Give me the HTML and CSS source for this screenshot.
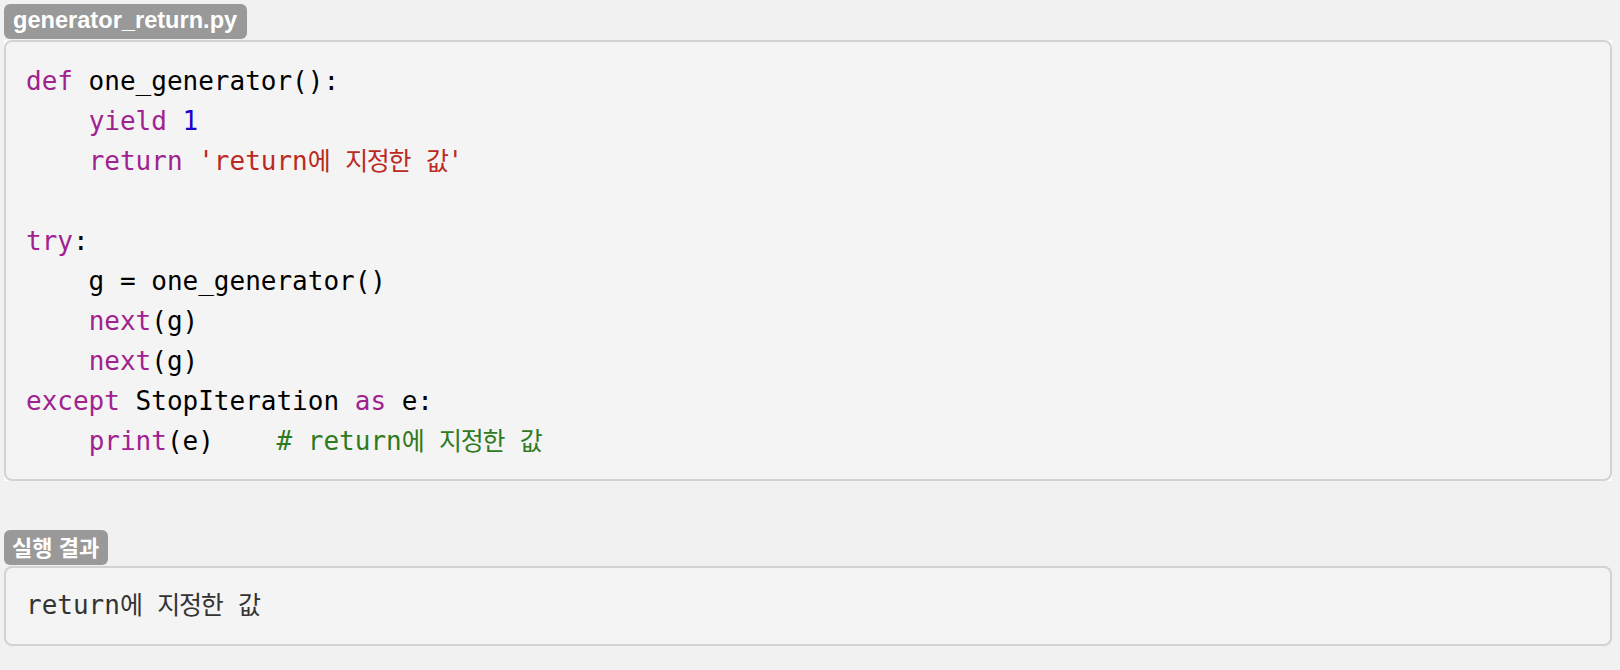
FILE: index.html
```html
<!DOCTYPE html>
<html lang="ko">
<head>
<meta charset="utf-8">
<title>generator_return.py</title>
<link rel="stylesheet" href="styles.css">
</head>
<body>
<div class="page">
  <section class="snippet">
    <div class="label">generator_return.py</div>
    <div class="code-wrap">
      <div class="code">
        <div class="line"><span class="kw">def</span> one_generator():</div>
        <div class="line">    <span class="kw">yield</span> <span class="num">1</span></div>
        <div class="line">    <span class="kw">return</span> <span class="str">'return<span class="ko">에</span> <span class="ko">지정한</span> <span class="ko">값</span>'</span></div>
        <div class="line"> </div>
        <div class="line"><span class="kw">try</span>:</div>
        <div class="line">    g = one_generator()</div>
        <div class="line">    <span class="kw">next</span>(g)</div>
        <div class="line">    <span class="kw">next</span>(g)</div>
        <div class="line"><span class="kw">except</span> StopIteration <span class="kw">as</span> e:</div>
        <div class="line">    <span class="kw">print</span>(e)    <span class="cmt"># return<span class="ko">에</span> <span class="ko">지정한</span> <span class="ko">값</span></span></div>
      </div>
    </div>
  </section>
  <section class="snippet result">
    <div class="label label-ko">실행 결과</div>
    <div class="code output">
      <div class="line">return<span class="ko">에</span> <span class="ko">지정한</span> <span class="ko">값</span></div>
    </div>
  </section>
</div>
</body>
</html>
```
FILE: styles.css
```css
html, body {
  margin: 0;
  padding: 0;
}
body {
  background: #f1f1f1;
}
.page {
  padding: 4px 8px 0 4px;
  display: flex;
  flex-direction: column;
}
.snippet {
  display: flex;
  flex-direction: column;
  align-items: flex-start;
}
.result {
  margin-top: 49px;
}
.label {
  background: #999999;
  color: #ffffff;
  font-family: "Liberation Sans", "Noto Sans CJK KR", sans-serif;
  font-weight: bold;
  font-size: 23.6px;
  line-height: 33px;
  padding: 0 10px 2px 9px;
  border-radius: 6px;
  margin-bottom: 1px;
}
.label-ko {
  font-family: "Noto Sans CJK KR", sans-serif;
  font-size: 22px;
  padding: 0 9px 2px 8px;
}
.code-wrap {
  align-self: stretch;
  background: #ffffff;
}
.code {
  box-sizing: border-box;
  align-self: stretch;
  background: #f4f4f4;
  border: 2px solid #d2d2d2;
  border-radius: 8px;
  font-family: "DejaVu Sans Mono", "Noto Sans CJK KR", monospace;
  font-size: 26px;
  line-height: 40px;
  color: #000000;
  padding: 19px 20px 18px 20px;
}
.line {
  white-space: pre;
  height: 40px;
}
.output {
  color: #333333;
  padding: 17px 20px 19px 20px;
}
.ko {
  font-family: "Noto Sans CJK KR", sans-serif;
  font-size: 25px;
  letter-spacing: -1.3px;
  line-height: 1;
}
.kw {
  color: #a0228f;
}
.num {
  color: #1c00cf;
}
.str {
  color: #bb2a22;
}
.cmt {
  color: #2f7a1f;
}
```
